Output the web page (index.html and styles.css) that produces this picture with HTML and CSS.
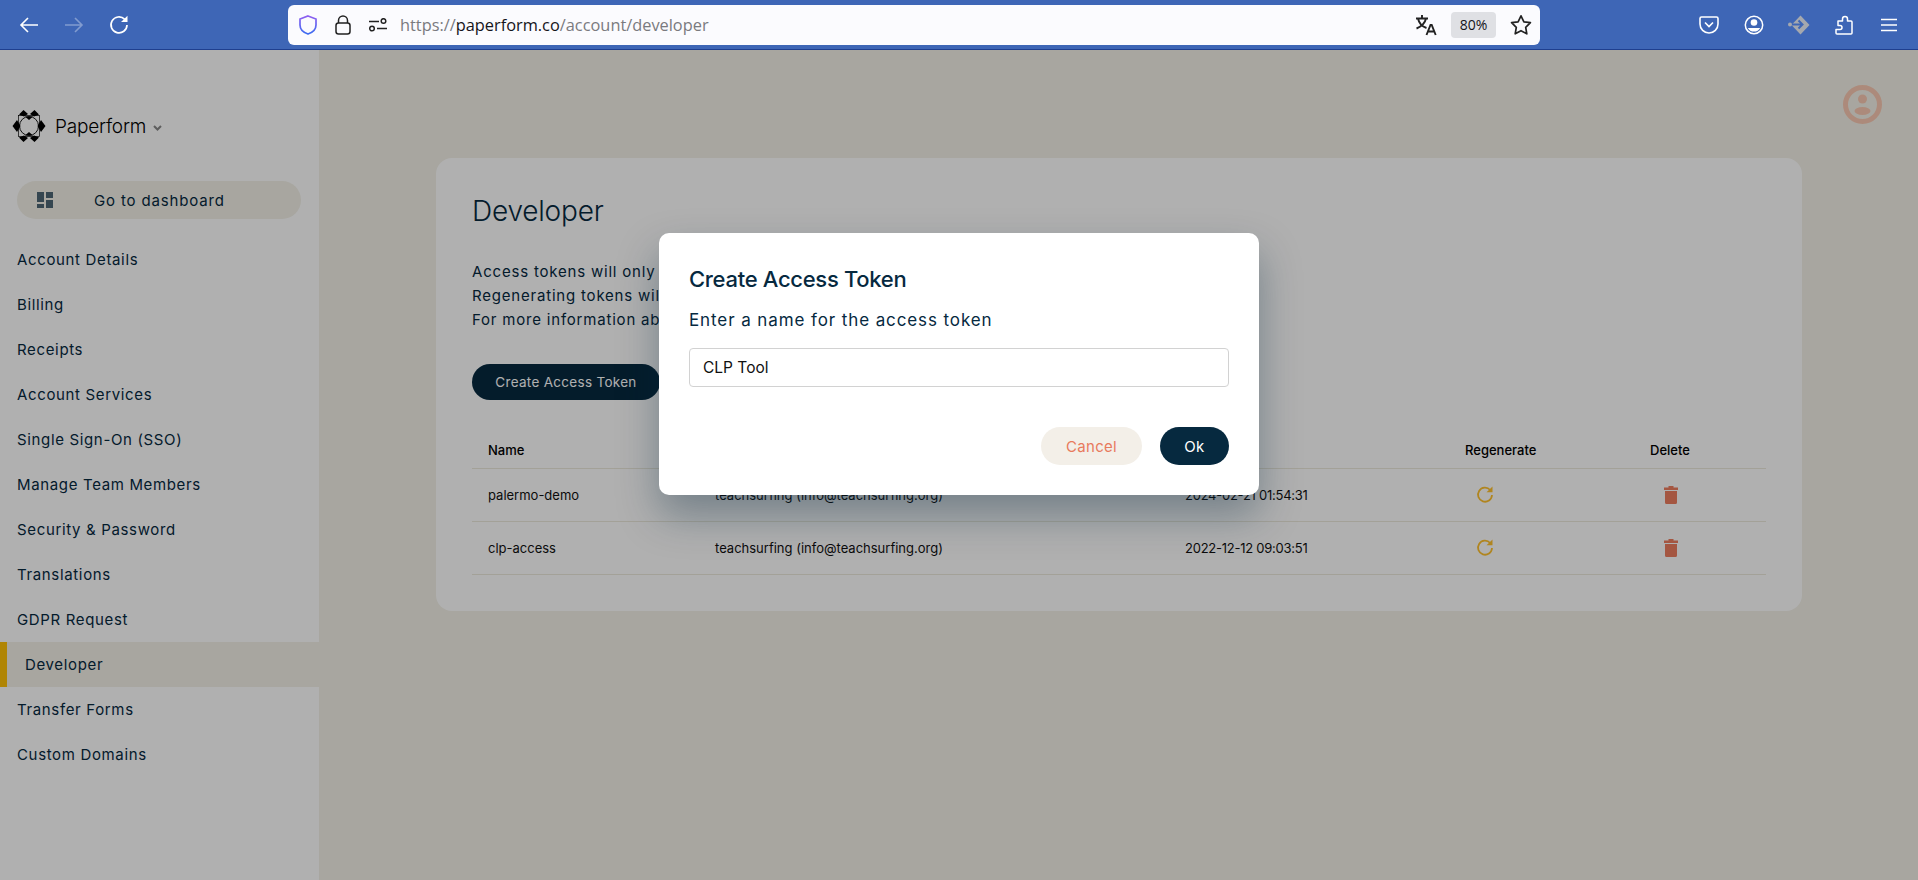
FILE: index.html
```html
<!DOCTYPE html>
<html>
<head>
    <title>Developer - Paperform</title>
    <link rel="stylesheet" href="styles.css">
</head>
<body>
    <div class="browser-bar">
        <div class="nav-buttons">
            <span class="tool-btn">
                <svg width="20" height="20" viewBox="0 0 20 20" fill="none" stroke="#fff" stroke-width="1.6"><path d="M19 10H2M9 3l-7 7 7 7"/></svg>
            </span>
            <span class="tool-btn dimmed">
                <svg width="20" height="20" viewBox="0 0 20 20" fill="none" stroke="#fff" stroke-width="1.6"><path d="M1 10h17M11 3l7 7-7 7"/></svg>
            </span>
            <span class="tool-btn">
                <svg width="20" height="20" viewBox="0 0 20 20" fill="none"><path d="M15.6 4.2A8 8 0 1 0 18 10" stroke="#fff" stroke-width="1.7"/><path d="M12 7h6.5V0.8z" fill="#fff"/></svg>
            </span>
        </div>
        <div class="url-bar">
            <svg class="shield" width="18" height="20" viewBox="0 0 18 20" fill="none" stroke-width="1.7"><defs><linearGradient id="shieldLine" x1="0" y1="0" x2="0" y2="1"><stop offset="0" stop-color="#8f5ff0"/><stop offset="1" stop-color="#3c6cf0"/></linearGradient></defs><path d="M9 1l8 3v6c0 4.500-3.500 7.500-8 9-4.500-1.500-8-4.500-8-9V4z" stroke="url(#shieldLine)"/></svg>
            <svg class="lock" width="16" height="20" viewBox="0 0 16 20" fill="none" stroke="#222" stroke-width="1.5"><rect x="1" y="8" width="14" height="11" rx="2.500"/><path d="M3.500 8V5.500a4.500 4.500 0 0 1 9 0V8"/></svg>
            <svg class="sliders" width="18" height="14" viewBox="0 0 18 14" fill="none" stroke="#222" stroke-width="1.500"><path d="M0 3.500h10M8 10.500h10"/><circle cx="14.500" cy="3" r="2.300"/><circle cx="3" cy="10.500" r="2.300"/></svg>
            <div class="url-text">https://<b>paperform.co</b>/account/developer</div>
            <svg class="translate" width="22" height="22" viewBox="0 0 22 22" fill="none" stroke="#222" stroke-width="1.900"><path d="M1 4.500h12M7 1v3.500M3 4.500c1 4.500 4 8 8.500 9.500M11 4.500C10 9 6.500 12.500 1.500 14.500"/><path d="M11.500 21l4-10h1.200l4 10M13 17.500h6.500"/></svg>
            <span class="zoom-chip">80%</span>
            <svg class="star" width="22" height="22" viewBox="0 0 22 22" fill="none" stroke="#222" stroke-width="1.700" stroke-linejoin="round"><path d="M11 1.800l2.900 6 6.500.9-4.700 4.600 1.100 6.500-5.800-3.100-5.800 3.100 1.100-6.500-4.700-4.600 6.500-.9z"/></svg>
        </div>
        <div class="ext-buttons">
            <span class="tool-btn">
                <svg width="20" height="18" viewBox="0 0 20 18" fill="none" stroke="#fff" stroke-width="1.600"><path d="M2.500 1h15A1.500 1.500 0 0 1 19 2.500V8a9 9 0 0 1-18 0V2.500A1.500 1.500 0 0 1 2.500 1z"/><path d="M6 6.500l4 4 4-4"/></svg>
            </span>
            <span class="tool-btn">
                <svg width="20" height="20" viewBox="0 0 20 20" fill="none"><circle cx="10" cy="10" r="8.700" stroke="#fff" stroke-width="1.500"/><circle cx="10" cy="7.500" r="3.300" fill="#fff"/><path d="M3.800 13h12.400c-1.200 2.500-3.500 3.600-6.200 3.600S5 15.500 3.800 13z" fill="#fff"/></svg>
            </span>
            <span class="tool-btn">
                <svg width="22" height="20" viewBox="0 0 22 20"><path d="M12.500 0.500l9 9.500-9 9.500-9-9.500z" fill="#a5a8ae"/><path d="M4 9.500h9.500M10.500 5.500l4 4-4 4" fill="none" stroke="#3e66b6" stroke-width="2"/><circle cx="2" cy="9.500" r="2" fill="#a5a8ae"/></svg>
            </span>
            <span class="tool-btn">
                <svg width="18" height="20" viewBox="0 0 18 20" fill="none" stroke="#fff" stroke-width="1.500" stroke-linejoin="round"><path d="M2 19h14a1 1 0 0 0 1-1V7a1 1 0 0 0-1-1h-3.500V4a2.500 2.500 0 0 0-5 0v2H3v4.500h2a2 2 0 0 1 0 4H1V18a1 1 0 0 0 1 1z"/></svg>
            </span>
            <span class="tool-btn">
                <svg width="16" height="14" viewBox="0 0 16 14" fill="none" stroke="#fff" stroke-width="1.500"><path d="M0 1.500h16M0 7h16M0 12.500h16"/></svg>
            </span>
        </div>
    </div>

    <div class="page">
        <div class="sidebar">
            <div class="brand">
                <svg width="34" height="34" viewBox="0 0 34 34">
                    <rect x="6.500" y="6.500" width="21" height="21" fill="none" stroke="#000" stroke-width=".7"/>
                    <circle cx="17" cy="17" r="9.500" fill="none" stroke="#000" stroke-width=".9"/>
                    <path d="M7 5.500L11.500 1 16 5l-4 2.500zM27 5.500L22.500 1 18 5l4 2.500zM13 7.500h8L17 11zM7 28.500L11.500 33 16 29l-4-2.500zM27 28.500L22.500 33 18 29l4-2.500zM13 26.500h8L17 23zM.5 17L5 11l3.500 6L5 23zM33.500 17L29 11l-3.500 6 3.500 6z" fill="#000"/>
                </svg>
                <span class="brand-name">Paperform</span>
                <svg class="brand-caret" width="9" height="6" viewBox="0 0 9 6" fill="none" stroke="#888" stroke-width="2"><path d="M1 1l3.500 3.500L8 1"/></svg>
            </div>
            <a class="dashboard-btn">
                <svg width="16" height="16" viewBox="0 0 16 16" fill="#4d6675"><path d="M0 0h7v10H0zM9 0h7v6H9zM0 12h7v4H0zM9 8h7v8H9z"/></svg>
                <span>Go to dashboard</span>
            </a>
            <a class="side-link">Account Details</a>
            <a class="side-link">Billing</a>
            <a class="side-link">Receipts</a>
            <a class="side-link">Account Services</a>
            <a class="side-link">Single Sign-On (SSO)</a>
            <a class="side-link">Manage Team Members</a>
            <a class="side-link">Security &amp; Password</a>
            <a class="side-link">Translations</a>
            <a class="side-link">GDPR Request</a>
            <a class="side-link active">Developer</a>
            <a class="side-link">Transfer Forms</a>
            <a class="side-link">Custom Domains</a>
        </div>

        <div class="main">
            <div class="top-row">
                <svg class="avatar" width="39" height="39" viewBox="0 0 39 39"><circle cx="19.500" cy="19.500" r="17" fill="none" stroke="#fac9b2" stroke-width="5"/><circle cx="19.500" cy="14" r="4.500" fill="#fac9b2"/><ellipse cx="19.500" cy="26" rx="8" ry="4" fill="#fac9b2"/></svg>
            </div>
            <div class="card">
                <h1>Developer</h1>
                <p>Access tokens will only be shown once.</p>
                <p>Regenerating tokens will revoke the old one.</p>
                <p>For more information about the API see the docs.</p>
                <button class="create-btn">Create Access Token</button>
                <table>
                    <tr>
                        <th class="col-name">Name</th>
                        <th class="col-user">User</th>
                        <th class="col-date">Created</th>
                        <th class="col-regen">Regenerate</th>
                        <th>Delete</th>
                    </tr>
                    <tr>
                        <td>palermo-demo</td>
                        <td>teachsurfing (info@teachsurfing.org)</td>
                        <td class="date-cell">2024-02-21 01:54:31</td>
                        <td><svg class="regen-icon" width="18" height="18" viewBox="0 0 18 18" fill="none"><path d="M14.200 4A7 7 0 1 0 16 9" stroke="#ffc12e" stroke-width="1.800"/><path d="M10.500 6.200h6V0.500z" fill="#ffc12e"/></svg></td>
                        <td><svg class="trash-icon" width="14" height="19" viewBox="0 0 14 19" fill="#ee7d5f"><path d="M0 2.500h4.500V1h5v1.500H14V5H0zM1 6h12v11.500a1.500 1.500 0 0 1-1.500 1.500h-9A1.500 1.500 0 0 1 1 17.500z"/></svg></td>
                    </tr>
                    <tr>
                        <td>clp-access</td>
                        <td>teachsurfing (info@teachsurfing.org)</td>
                        <td class="date-cell">2022-12-12 09:03:51</td>
                        <td><svg class="regen-icon" width="18" height="18" viewBox="0 0 18 18" fill="none"><path d="M14.200 4A7 7 0 1 0 16 9" stroke="#ffc12e" stroke-width="1.800"/><path d="M10.500 6.200h6V0.500z" fill="#ffc12e"/></svg></td>
                        <td><svg class="trash-icon" width="14" height="19" viewBox="0 0 14 19" fill="#ee7d5f"><path d="M0 2.500h4.500V1h5v1.500H14V5H0zM1 6h12v11.500a1.500 1.500 0 0 1-1.500 1.500h-9A1.500 1.500 0 0 1 1 17.500z"/></svg></td>
                    </tr>
                </table>
            </div>
        </div>

        <div class="overlay">
            <div class="modal">
                <h2>Create Access Token</h2>
                <div class="modal-label">Enter a name for the access token</div>
                <input class="modal-input" type="text" value="CLP Tool">
                <div class="modal-actions">
                    <button class="cancel-btn">Cancel</button>
                    <button class="ok-btn">Ok</button>
                </div>
            </div>
        </div>
    </div>
</body>
</html>
```

FILE: styles.css
```css
* {
    box-sizing: border-box;
}
html, body {
    margin: 0;
    height: 100%;
    overflow: hidden;
}
body {
    font-family: Inter, "Liberation Sans", sans-serif;
    color: #06293f;
    background: #f3f1e8;
}

/* browser toolbar */
.browser-bar {
    height: 50px;
    display: flex;
    align-items: center;
    background: #3e66b6;
    border-bottom: 1px solid #1f3f8f;
}
.nav-buttons {
    display: flex;
    width: 288px;
    padding-left: 6px;
}
.tool-btn {
    width: 45px;
    height: 32px;
    display: flex;
    align-items: center;
    justify-content: center;
}
.dimmed {
    opacity: 0.35;
}
.url-bar {
    width: 1252px;
    height: 40px;
    display: flex;
    align-items: center;
    padding: 0 8px 0 11px;
    background: #fbfbfe;
    border-radius: 6px;
}
.lock {
    margin-left: 18px;
}
.sliders {
    margin-left: 18px;
}
.url-text {
    flex: 1;
    margin-left: 13px;
    font-family: "Open Sans", sans-serif;
    font-size: 16.350px;
    color: #7a7a7e;
}
.url-text b {
    font-weight: 400;
    color: #15141a;
}
.zoom-chip {
    width: 45px;
    height: 26px;
    margin: 0 14px;
    display: flex;
    align-items: center;
    justify-content: center;
    background: #dfe0e4;
    border-radius: 4px;
    font-family: "Open Sans", sans-serif;
    font-size: 14px;
    color: #15141a;
}
.ext-buttons {
    flex: 1;
    display: flex;
    justify-content: flex-end;
    padding-right: 7px;
}

/* page under the dialog */
.page {
    position: relative;
    height: 830px;
    display: flex;
}
.sidebar {
    width: 319px;
    background: #fff;
    font-size: 15px;
    letter-spacing: 0.65px;
}
.brand {
    height: 131px;
    display: flex;
    align-items: center;
    padding: 21px 0 0 12px;
}
.brand-name {
    margin-left: 9px;
    font-size: 19px;
    font-weight: 300;
    letter-spacing: -0.2px;
    color: #000;
}
.brand-caret {
    margin: 3px 0 0 7px;
}
.dashboard-btn {
    height: 38px;
    margin: 0 18px 18px 17px;
    display: flex;
    align-items: center;
    padding-left: 20px;
    background: #f3f1e8;
    border-radius: 19px;
}
.dashboard-btn span {
    margin-left: 41px;
    letter-spacing: 0.85px;
}
.side-link {
    height: 45px;
    display: flex;
    align-items: center;
    padding-left: 17px;
}
.side-link.active {
    padding-left: 18px;
    background: #f3f1e8;
    border-left: 7px solid #ffc107;
}

.main {
    flex: 1;
    padding: 0 116px 0 117px;
}
.top-row {
    height: 108px;
    display: flex;
    justify-content: flex-end;
    align-items: flex-end;
    margin-right: -80px;
}
.avatar {
    margin-bottom: 34px;
}
.card {
    height: 453px;
    padding: 35px 36px 0;
    background: #fff;
    border-radius: 16px;
}
.card h1 {
    margin: 0 0 31px;
    font-size: 28px;
    font-weight: 300;
    letter-spacing: -0.2px;
    line-height: 36px;
}
.card p {
    margin: 0;
    font-size: 15px;
    letter-spacing: 0.8px;
    line-height: 24px;
}
.create-btn {
    height: 36px;
    width: 188px;
    margin: 32px 0 32px;
    display: block;
    border: none;
    border-radius: 18px;
    background: #06293f;
    color: #fff;
    font-family: inherit;
    font-size: 13.500px;
    letter-spacing: 0.3px;
}
table {
    width: 100%;
    border-collapse: collapse;
    font-size: 13px;
}
th {
    height: 36px;
    padding: 0 0 0 16px;
    font-weight: 500;
    text-align: left;
    border-bottom: 1px solid #ece9dd;
    color: #000;
}
td {
    height: 53px;
    padding: 0 0 0 16px;
    border-bottom: 1px solid #ece9dd;
    color: #111;
}
.date-cell {
    letter-spacing: -0.25px;
}
.col-name {
    width: 227px;
}
.col-user {
    width: 470px;
}
.col-date {
    width: 280px;
}
.col-regen {
    width: 185px;
}
.regen-icon {
    display: block;
    margin-left: 11px;
}
.trash-icon {
    display: block;
    margin-left: 14px;
}

/* dialog */
.overlay {
    position: absolute;
    inset: 0;
    background: rgba(0, 0, 0, 0.31);
}
.modal {
    position: absolute;
    left: 659px;
    top: 183px;
    width: 600px;
    height: 262px;
    padding: 31px 30px 30px;
    background: #fff;
    border-radius: 10px;
    box-shadow: 0 20px 40px rgba(6, 41, 63, 0.35);
}
.modal h2 {
    margin: 0 0 13px;
    font-size: 22px;
    font-weight: 500;
    letter-spacing: -0.3px;
    line-height: 30px;
}
.modal-label {
    font-size: 17px;
    letter-spacing: 0.9px;
    line-height: 26px;
}
.modal-input {
    width: 540px;
    height: 39px;
    margin-top: 15px;
    padding: 0 13px;
    display: block;
    border: 1px solid #d2d2d2;
    border-radius: 4px;
    font-family: inherit;
    font-size: 15.500px;
    color: #111;
}
.modal-actions {
    margin-top: 40px;
    display: flex;
    justify-content: flex-end;
    gap: 18px;
}
.modal-actions button {
    height: 38px;
    border: none;
    border-radius: 19px;
    font-family: inherit;
    font-size: 15px;
    letter-spacing: 0.3px;
}
.cancel-btn {
    width: 101px;
    background: #f3efe8;
    color: #e87a5d;
}
.ok-btn {
    width: 69px;
    background: #06293f;
    color: #fff;
}
```
